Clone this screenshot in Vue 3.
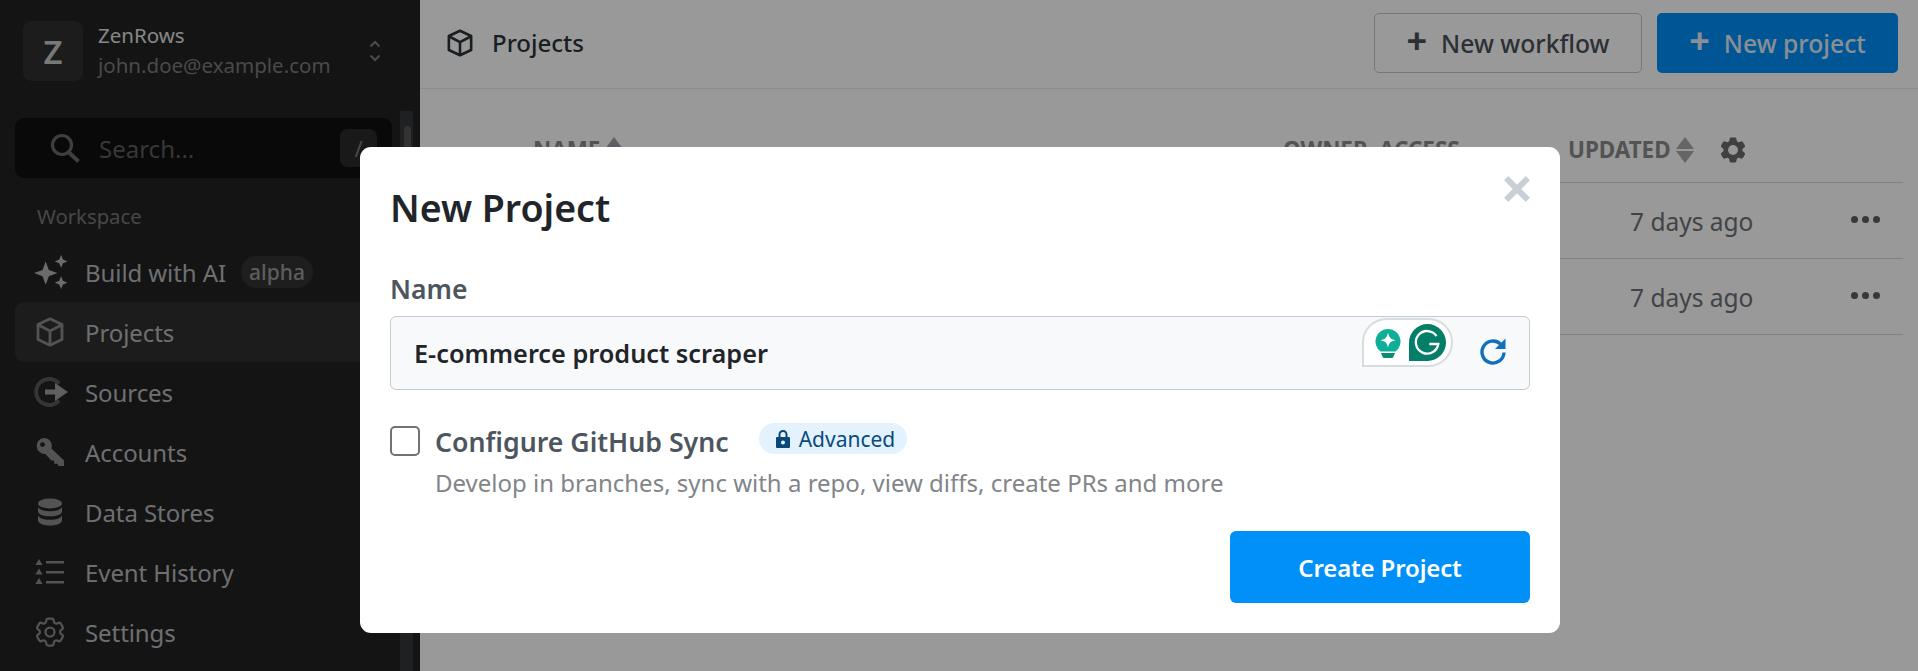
<script setup>
const gear = "M9.594 3.94c.09-.542.56-.94 1.11-.94h2.593c.55 0 1.02.398 1.11.94l.213 1.281c.063.374.313.686.645.87.074.04.147.083.22.127.325.196.72.257 1.075.124l1.217-.456a1.125 1.125 0 0 1 1.37.49l1.296 2.247a1.125 1.125 0 0 1-.26 1.431l-1.003.827c-.293.241-.438.613-.43.992a7.723 7.723 0 0 1 0 .255c-.008.378.137.75.43.991l1.004.827c.424.35.534.955.26 1.43l-1.298 2.247a1.125 1.125 0 0 1-1.369.491l-1.217-.456c-.355-.133-.75-.072-1.076.124a6.47 6.47 0 0 1-.22.128c-.331.183-.581.495-.644.869l-.213 1.281c-.09.543-.56.94-1.11.94h-2.594c-.55 0-1.019-.398-1.11-.94l-.213-1.281c-.062-.374-.312-.686-.644-.87a6.52 6.52 0 0 1-.22-.127c-.325-.196-.72-.257-1.076-.124l-1.217.456a1.125 1.125 0 0 1-1.369-.49l-1.297-2.247a1.125 1.125 0 0 1 .26-1.431l1.004-.827c.292-.24.437-.613.43-.991a6.932 6.932 0 0 1 0-.255c.007-.38-.138-.751-.43-.992l-1.004-.827a1.125 1.125 0 0 1-.26-1.43l1.297-2.247a1.125 1.125 0 0 1 1.37-.491l1.216.456c.356.133.751.072 1.076-.124.072-.044.146-.086.22-.128.332-.183.582-.495.644-.869l.214-1.28Z";
const rows = [1, 2];
</script>

<template>
  <div class="page">
    <aside class="sidebar">
      <div class="side-col">
        <div class="org">
          <div class="avatar">Z</div>
          <div class="org-text">
            <div class="org-name">ZenRows</div>
            <div class="org-mail">john.doe@example.com</div>
          </div>
          <svg class="updown" viewBox="0 0 12 24" width="12" height="24" fill="none" stroke="currentColor" stroke-width="2"><path d="M1.5 7.5 6 3l4.500 4.500M1.500 16.500 6 21l4.500-4.500"/></svg>
        </div>
        <div class="search">
          <svg class="search-ico" viewBox="0 0 30 30" width="30" height="30" fill="none" stroke="currentColor" stroke-width="3.200"><circle cx="12" cy="12" r="9.500"/><path d="m18.500 19 10 9.500" stroke-width="4"/></svg>
          <span class="search-text">Search...</span>
          <span class="kbd">/</span>
        </div>
        <div class="section">Workspace</div>
        <nav class="nav">
          <div class="nav-item">
            <svg class="nav-ico ai" viewBox="0 0 32 32" width="34" height="34" fill="currentColor"><path d="M11 6 14 14l8 3-8 3-3 8-3-8-8-3 8-3zM25.500 0l1.800 4.200 4.200 1.800-4.200 1.800-1.800 4.200-1.800-4.200L19.500 6l4.200-1.800zM25.500 20l1.800 4.200 4.200 1.800-4.200 1.800-1.800 4.200-1.800-4.200-4.200-1.800 4.200-1.800z"/></svg>
            <span>Build with AI</span>
            <span class="alpha">alpha</span>
          </div>
          <div class="nav-item active">
            <svg class="nav-ico" viewBox="0 0 28 30" width="28" height="30" fill="none" stroke="currentColor" stroke-width="2.800" stroke-linejoin="round"><path d="M14 1.800 26 7.500v15L14 28.200 2 22.500v-15zM2.500 8 14 14l11.500-6M14 14v14"/></svg>
            <span>Projects</span>
          </div>
          <div class="nav-item">
            <svg class="nav-ico src" viewBox="0 0 36 32" width="36" height="32" fill="none"><path d="M26 7.500A13 13 0 1 0 26 24.500" stroke="#565a5e" stroke-width="4"/><path d="M12 13.500h10V7l13 9-13 9v-6.500H12z" fill="#9f9f9f"/></svg>
            <span>Sources</span>
          </div>
          <div class="nav-item">
            <svg class="nav-ico" viewBox="0 0 32 32" width="30" height="30" fill="currentColor"><path d="M9.500 1a8.500 8.500 0 0 1 8 11.300L31 25v6h-6l-1-2.500h-3.500V25h-3l-6.500-7a8.500 8.500 0 1 1-1.500-17zM8 5.500a2.600 2.600 0 1 0 0 5.200 2.600 2.600 0 0 0 0-5.200z" fill-rule="evenodd"/></svg>
            <span>Accounts</span>
          </div>
          <div class="nav-item">
            <svg class="nav-ico" viewBox="0 0 26 28" width="26" height="28" fill="currentColor"><ellipse cx="13" cy="5.500" rx="12" ry="5"/><path d="M1 9c2 3 6 4.200 12 4.200S23 12 25 9v5c-1.500 3-6 4.300-12 4.300S2.500 17 1 14zM1 17.500c2 3 6 4.200 12 4.200s10-1.200 12-4.200V23c-1.500 3-6 4.500-12 4.500S2.500 26 1 23z"/></svg>
            <span>Data Stores</span>
          </div>
          <div class="nav-item">
            <svg class="nav-ico" viewBox="0 0 30 26" width="30" height="26" fill="currentColor"><path d="M4 0l3.600 6H.4zM4 9.500l3.600 6H.4zM4 19l3.600 6H.4z"/><path d="M11 2h18v2.400H11zM11 12h18v2.400H11zM11 22h18v2.400H11z"/></svg>
            <span>Event History</span>
          </div>
          <div class="nav-item">
            <svg class="nav-ico" viewBox="2 2 20 20" width="30" height="30" fill="none" stroke="currentColor" stroke-width="1.500"><path :d="gear"/><circle cx="12" cy="12" r="3"/></svg>
            <span>Settings</span>
          </div>
        </nav>
      </div>
      <div class="track"><div class="thumb"></div></div>
    </aside>

    <main class="main">
      <header class="topbar">
        <svg class="top-ico" viewBox="0 0 28 30" width="26" height="28" fill="none" stroke="currentColor" stroke-width="2.800" stroke-linejoin="round"><path d="M14 1.800 26 7.500v15L14 28.200 2 22.500v-15zM2.500 8 14 14l11.500-6M14 14v14"/></svg>
        <span class="top-title">Projects</span>
        <button class="btn outline"><span class="plus">+</span>New workflow</button>
        <button class="btn primary"><span class="plus">+</span>New project</button>
      </header>
      <section class="table">
        <div class="thead">
          <span class="th-name">NAME<svg class="sort" viewBox="0 0 18 28" width="20" height="28"><path d="M9 1l9 12H0z" fill="#9aa1a8"/><path d="M9 27l9-12H0z" fill="#d9d9d9"/></svg></span>
          <span class="th-owner">OWNER</span>
          <span class="th-access">ACCESS</span>
          <span class="th-upd">UPDATED<svg class="sort" viewBox="0 0 18 28" width="20" height="28"><path d="M9 1l9 12H0z" fill="#a9a9a9"/><path d="M9 27l9-12H0z" fill="#a9a9a9"/></svg></span>
          <svg class="th-gear" viewBox="2 2 20 20" width="28" height="28" fill="#6b6b6b" fill-rule="evenodd"><path :d="gear + 'M12 8.500a3.500 3.500 0 1 0 0 7 3.500 3.500 0 0 0 0-7z'"/></svg>
        </div>
        <div v-for="r in rows" :key="r" class="row">
          <span class="date">7 days ago</span>
          <span class="dots"><i></i><i></i><i></i></span>
        </div>
      </section>
    </main>

    <div class="overlay">
      <div class="modal">
        <div class="modal-head">
          <h2 class="title">New Project</h2>
          <svg class="close" viewBox="0 0 24 24" width="26" height="26" fill="none" stroke="currentColor" stroke-width="5.500"><path d="M2 2l20 20M22 2 2 22"/></svg>
        </div>
        <label class="name-label">Name</label>
        <div class="input">
          <span class="input-val">E-commerce product scraper</span>
          <div class="gram">
            <svg viewBox="0 0 26 30" width="26" height="32"><path d="M13 1a12.500 12.500 0 0 1 7.500 22.500H5.500A12.500 12.500 0 0 1 13 1z" fill="#0fae96"/><path d="M13 4.500c1 5 2.500 6.700 7.500 7.700-5 1-6.500 2.500-7.500 7.500-1-5-2.500-6.500-7.500-7.500 5-1 6.500-2.700 7.500-7.700z" fill="#fff"/><path d="M6 25h14l-1.500 3.500a2 2 0 0 1-2 1.500h-7a2 2 0 0 1-2-1.500z" fill="#0c8a73"/></svg>
            <svg viewBox="0 0 37 37" width="37" height="37"><path d="M18.500 0a18.500 18.500 0 0 1 0 37H0V18.500A18.500 18.500 0 0 1 18.500 0z" fill="#047d69"/><path d="M27.500 12a11.300 11.300 0 1 0 1.800 8h-9" fill="none" stroke="#fff" stroke-width="2.300"/></svg>
          </div>
          <svg class="refresh" viewBox="0 0 28 28" width="28" height="28" fill="none"><path d="M21.500 7A11 11 0 1 0 25 15.500" stroke="#0f70bd" stroke-width="3.400"/><path d="M26.500 1.500V12H16z" fill="#0f70bd"/></svg>
        </div>
        <div class="sync">
          <span class="check"></span>
          <div class="sync-body">
            <div class="sync-top">
              <span class="sync-label">Configure GitHub Sync</span>
              <span class="badge">
                <svg viewBox="0 0 14 18" width="14" height="18" fill="#0a4776"><path d="M7 0a4.500 4.500 0 0 1 4.500 4.500V7H13a1 1 0 0 1 1 1v9a1 1 0 0 1-1 1H1a1 1 0 0 1-1-1V8a1 1 0 0 1 1-1h1.500V4.500A4.500 4.500 0 0 1 7 0zm0 2a2.500 2.500 0 0 0-2.500 2.500V7h5V4.500A2.500 2.500 0 0 0 7 2zm0 8.500a2 2 0 1 0 0 4 2 2 0 0 0 0-4z" fill-rule="evenodd"/></svg>
                Advanced
              </span>
            </div>
            <div class="sync-desc">Develop in branches, sync with a repo, view diffs, create PRs and more</div>
          </div>
        </div>
        <div class="actions">
          <button class="create">Create Project</button>
        </div>
      </div>
    </div>
  </div>
</template>

<style>
html, body { margin: 0; height: 100%; overflow: hidden; background: #fff; }
</style>

<style scoped>
* { box-sizing: border-box; }
.page {
  position: relative;
  display: flex;
  width: 100%;
  height: 671px;
  overflow: hidden;
  font-family: "Noto Sans", "Open Sans", sans-serif;
  background: #fff;
}
.sidebar {
  display: flex;
  width: 420px;
  flex: none;
  background: #222;
  color: #b4b6b9;
}
.side-col { width: 400px; flex: none; padding: 21px 0 0 15px; }
.org { display: flex; align-items: center; padding-left: 8px; width: 366px; }
.avatar {
  width: 60px; height: 60px; border-radius: 9px; background: #303030;
  color: #c8c8c8; font-size: 33px; font-weight: 600;
  display: flex; align-items: center; justify-content: center;
}
.org-text { margin-left: 15px; flex: 1; }
.org-name { font-size: 20.500px; line-height: 28px; color: #e0e0e0; }
.org-mail { font-size: 20.500px; line-height: 31px; margin-top: 1px; color: #7c7c7c; }
.updown { color: #7f7f7f; }
.search {
  margin-top: 37px; width: 377px; height: 60px; border-radius: 9px; background: #0f0f0f;
  display: flex; align-items: center; padding-left: 35px; color: #6a6a6a;
}
.search-ico { flex: none; }
.search-text { margin-left: 19px; font-size: 24px; color: #5d5d5d; }
.kbd {
  margin-left: auto; margin-right: 15px; width: 37px; height: 38px; border-radius: 8px;
  background: #2b2b2b; color: #7c7c7c; font-size: 22px; text-align: center; line-height: 38px;
}
.section { margin: 18px 0 0 22px; font-size: 20.300px; line-height: 40px; color: #777; }
.nav { margin-top: 6px; }
.nav-item {
  position: relative;
  display: flex; align-items: center; height: 60px; width: 400px; padding-left: 70px;
  font-size: 24px; letter-spacing: -0.08px; border-radius: 9px 0 0 9px; color: #b8babd;
}
.nav-item .nav-ico { position: absolute; left: 35px; top: 50%; transform: translate(-50%, -50%); color: #8a8a8a; }
.nav-item .ai { color: #b2b2b2; left: 36px; }
.nav-item .src { left: 36px; }
.active { background: #303030; }
.alpha {
  margin-left: 15px; height: 32px; padding: 0 8px; border-radius: 16px; background: #323232;
  color: #9a9ca0; font-size: 21px; line-height: 32px; font-weight: 500; letter-spacing: 0;
}
.track { margin-top: 111px; width: 13px; background: #33363a; height: 560px; padding: 15px 2px 0 4px; }
.thumb { width: 7px; height: 60px; border-radius: 4px; background: #555; }

.main { flex: 1; min-width: 0; }
.topbar {
  height: 89px; border-bottom: 1px solid #e8eaec;
  display: flex; align-items: center; padding: 0 20px 3px 27px; color: #2c3238;
}
.top-ico { margin-right: 19px; flex: none; }
.top-title { flex: 1; font-size: 24px; font-weight: 500; }
.btn {
  height: 60px; border-radius: 5px; font-family: inherit; font-size: 24.700px; font-weight: 500;
  display: flex; align-items: center; justify-content: center; padding: 2px 0 0 0;
}
.plus { font-size: 36px; font-weight: 700; margin-right: 14px; line-height: 1; margin-top: -5px; }
.outline { width: 268px; background: transparent; border: 1px solid #c6c6c6; color: #4a5159; margin-right: 15px; }
.primary { width: 241px; background: #0090f8; border: none; color: #e6eef5; }
.table { padding: 0 15px 0 16px; }
.thead {
  height: 94px; padding-top: 28px; border-bottom: 1px solid #d8d8d8; display: grid;
  grid-template-columns: 97px 750px 96px 189px 151px 1fr; align-items: center;
  font-size: 22.400px; font-weight: 700; color: #8a8a8a;
}
.th-name { grid-column: 2; display: flex; align-items: center; gap: 4px; }
.th-owner { grid-column: 3; }
.th-access { grid-column: 4; }
.th-upd { grid-column: 5; display: flex; align-items: center; gap: 4px; }
.th-gear { grid-column: 6; }
.row {
  height: 76px; border-bottom: 1px solid #d8d8d8;
  display: grid; grid-template-columns: 1194px 1fr 76px; align-items: center;
  font-size: 24.500px; color: #6d7277;
}
.date { grid-column: 2; margin-top: 2px; }
.dots { grid-column: 3; display: flex; justify-content: center; gap: 4px; margin-top: -2px; }
.dots i { width: 7px; height: 7px; border-radius: 50%; background: #5a5f64; }

.overlay {
  position: absolute; inset: 0; background: rgba(0, 0, 0, 0.4);
  padding: 147px 0 0 360px;
}
.modal {
  width: 1200px; height: 486px; background: #fff; border-radius: 11px; padding: 31px 30px 0 30px;
}
.modal-head { display: flex; justify-content: space-between; align-items: flex-start; height: 83px; }
.title { margin: 0; font-size: 37.500px; font-weight: 600; line-height: 60px; color: #212529; }
.close { color: #c9cfd7; margin: -2px 0 0 0; }
.name-label { display: block; font-size: 26.500px; line-height: 40px; font-weight: 600; color: #4d555e; margin-top: 8px; }
.input {
  position: relative;
  width: 1140px; height: 74px; margin-top: 7px; border: 1px solid #c4cad3; border-radius: 6px;
  background: #f8f9fb; display: flex; align-items: center; padding-left: 23px;
}
.input-val { font-size: 25.300px; font-weight: 600; color: #212529; margin-top: -1px; }
.gram {
  position: absolute; right: 76px; top: 1px; width: 91px; height: 49px;
  background: #fff; border: 2px solid #d9dcdf; border-radius: 25px 25px 25px 0;
  display: flex; align-items: center; justify-content: flex-end; gap: 8px; padding-right: 5px;
}
.refresh { position: absolute; right: 22px; top: 20px; }
.sync { display: flex; margin-top: 35px; }
.check { width: 30px; height: 30px; border: 2px solid #6e7378; border-radius: 5px; flex: none; margin-top: 1px; }
.sync-body { margin-left: 15px; }
.sync-top { display: flex; align-items: center; height: 34px; }
.sync-label { font-size: 26.700px; font-weight: 600; color: #4d555e; margin-top: -1px; }
.badge {
  margin-left: 30px; height: 31px; width: 148px; border-radius: 16px; background: #e3f2fd;
  color: #0a4a7c; font-size: 21px; display: flex; align-items: center; gap: 9px; padding-left: 17px;
  margin-top: -7px; flex: none;
}
.sync-desc { margin-top: 6px; font-size: 24px; line-height: 35px; color: #818589; white-space: nowrap; }
.actions { display: flex; justify-content: flex-end; margin-top: 31px; }
.create {
  width: 300px; height: 72px; border: none; border-radius: 6px; background: #0090f8; color: #fff;
  font-family: inherit; font-size: 24px; font-weight: 600; letter-spacing: -0.15px;
}
</style>
